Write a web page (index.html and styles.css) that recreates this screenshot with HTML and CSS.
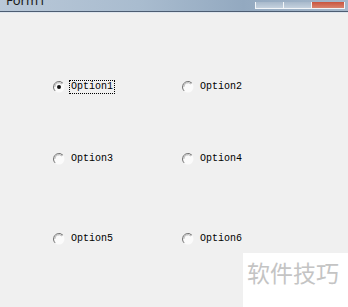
FILE: index.html
```html
<!DOCTYPE html>
<html lang="zh">
<head>
<meta charset="UTF-8" />
<meta name="viewport" content="width=device-width, initial-scale=1" />
<title>Form1</title>
<link rel="stylesheet" href="styles.css">
</head>
<body>

  <div class="window">
    <div class="titlebar">
      <span class="title">Form1</span>
      <div class="caption-buttons">
        <span class="cap-btn"></span>
        <span class="cap-btn"></span>
        <span class="cap-btn close"></span>
      </div>
    </div>

    <div class="client">
      <label class="option checked">
        <svg class="radio" width="12" height="12" viewBox="0 0 12 12">
          <circle cx="6" cy="6" r="5.5" fill="#fbfbfb"/>
          <path d="M9.9 2.1 A5.5 5.5 0 0 0 0.5 6 A5.5 5.5 0 0 0 2.1 9.9" fill="none" stroke="#6f6f6f" stroke-width="1"/>
          <path d="M9 3 A4.2 4.2 0 0 0 1.8 6" fill="none" stroke="#b5b5b5" stroke-width="1"/>
          <circle cx="6" cy="6" r="2" fill="#111"/>
        </svg>
        <span class="text focus">Option1</span>
      </label>
      <label class="option">
        <svg class="radio" width="12" height="12" viewBox="0 0 12 12">
          <circle cx="6" cy="6" r="5.5" fill="#fbfbfb"/>
          <path d="M9.9 2.1 A5.5 5.5 0 0 0 0.5 6 A5.5 5.5 0 0 0 2.1 9.9" fill="none" stroke="#6f6f6f" stroke-width="1"/>
          <path d="M9 3 A4.2 4.2 0 0 0 1.8 6" fill="none" stroke="#b5b5b5" stroke-width="1"/>
        </svg>
        <span class="text">Option2</span>
      </label>
      <label class="option">
        <svg class="radio" width="12" height="12" viewBox="0 0 12 12">
          <circle cx="6" cy="6" r="5.5" fill="#fbfbfb"/>
          <path d="M9.9 2.1 A5.5 5.5 0 0 0 0.5 6 A5.5 5.5 0 0 0 2.1 9.9" fill="none" stroke="#6f6f6f" stroke-width="1"/>
          <path d="M9 3 A4.2 4.2 0 0 0 1.8 6" fill="none" stroke="#b5b5b5" stroke-width="1"/>
        </svg>
        <span class="text">Option3</span>
      </label>
      <label class="option">
        <svg class="radio" width="12" height="12" viewBox="0 0 12 12">
          <circle cx="6" cy="6" r="5.5" fill="#fbfbfb"/>
          <path d="M9.9 2.1 A5.5 5.5 0 0 0 0.5 6 A5.5 5.5 0 0 0 2.1 9.9" fill="none" stroke="#6f6f6f" stroke-width="1"/>
          <path d="M9 3 A4.2 4.2 0 0 0 1.8 6" fill="none" stroke="#b5b5b5" stroke-width="1"/>
        </svg>
        <span class="text">Option4</span>
      </label>
      <label class="option">
        <svg class="radio" width="12" height="12" viewBox="0 0 12 12">
          <circle cx="6" cy="6" r="5.5" fill="#fbfbfb"/>
          <path d="M9.9 2.1 A5.5 5.5 0 0 0 0.5 6 A5.5 5.5 0 0 0 2.1 9.9" fill="none" stroke="#6f6f6f" stroke-width="1"/>
          <path d="M9 3 A4.2 4.2 0 0 0 1.8 6" fill="none" stroke="#b5b5b5" stroke-width="1"/>
        </svg>
        <span class="text">Option5</span>
      </label>
      <label class="option">
        <svg class="radio" width="12" height="12" viewBox="0 0 12 12">
          <circle cx="6" cy="6" r="5.5" fill="#fbfbfb"/>
          <path d="M9.9 2.1 A5.5 5.5 0 0 0 0.5 6 A5.5 5.5 0 0 0 2.1 9.9" fill="none" stroke="#6f6f6f" stroke-width="1"/>
          <path d="M9 3 A4.2 4.2 0 0 0 1.8 6" fill="none" stroke="#b5b5b5" stroke-width="1"/>
        </svg>
        <span class="text">Option6</span>
      </label>
    </div>

    <div class="watermark">软件技巧</div>
  </div>

</body>
</html>
```

FILE: styles.css
```css
body {
  margin: 0; padding: 0;
  background: #f0f0f0;
}

.window {
  position: relative;
  width: 348px;
  height: 307px;
  overflow: hidden;
  background: #f0f0f0;
}

/* Barra de título (recortada arriba) */
.titlebar {
  height: 11px;
  display: flex;
  justify-content: space-between;
  align-items: flex-end;
  background: linear-gradient(90deg, #b9c8d8 0%, #a9bccf 40%, #93a9c0 70%, #a6b8cb 100%);
  border-bottom: 1px solid #4d5d72;
  box-shadow: 0 1px 0 #dfe6ee;
}

.title {
  font-family: "Noto Sans", "Liberation Sans", sans-serif;
  font-size: 13px;
  line-height: 13px;
  color: #1a1a1a;
  margin-left: 6px;
  margin-bottom: 4px;
  height: 7px;
  overflow: hidden;
  display: flex;
  align-items: flex-end;
}

.caption-buttons {
  display: flex;
  height: 7px;
  margin-right: 3px;
  margin-bottom: 2px;
}

.cap-btn {
  width: 27px;
  border: 1px solid #f2f5f8;
  border-top: none;
  border-right: none;
  background: linear-gradient(#a8b9cb, #c4d1de);
}

.cap-btn.close {
  width: 32px;
  background: linear-gradient(#c9553f, #d9836e);
  border-right: 1px solid #f2f5f8;
}

/* Área cliente */
.client {
  display: grid;
  grid-template-columns: 129px 129px;
  grid-template-rows: 72px 80px 14px;
  padding: 68px 0 0 53px;
}

.option {
  display: flex;
  align-items: center;
  gap: 4px;
  height: 14px;
  font-family: "Liberation Mono", "DejaVu Sans Mono", monospace;
  font-size: 10px;
  color: #000;
}

.radio {
  flex: none;
}

.text {
  padding: 1px 1px;
  line-height: 10px;
  border: 1px dotted transparent;
}

.text.focus {
  border-color: #000;
}

/* Marca de agua */
.watermark {
  position: absolute;
  left: 243px;
  top: 253px;
  width: 105px;
  height: 54px;
  background: #fff;
  font-family: "Noto Sans CJK SC", sans-serif;
  font-size: 23px;
  line-height: 30px;
  color: #c4c4c4;
  padding: 4px 0 0 4px;
  box-sizing: border-box;
  white-space: nowrap;
}
```
